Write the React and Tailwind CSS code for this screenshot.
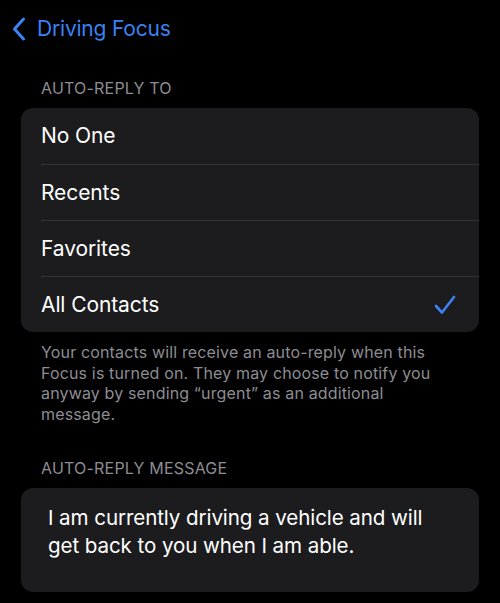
import React from 'react';

const options = ['No One', 'Recents', 'Favorites', 'All Contacts'];

const BackChevron = () => (
  <svg width="14" height="24" viewBox="0 0 14 24" fill="none">
    <path d="M11.5 2 L2.5 12 L11.5 22" stroke="#3b82f6" strokeWidth="3" strokeLinecap="round" strokeLinejoin="round" />
  </svg>
);

const Check = () => (
  <svg width="22" height="20" viewBox="0 0 22 20" fill="none">
    <path d="M2 11 L8 17.5 L20 2" stroke="#3b82f6" strokeWidth="2.6" strokeLinecap="round" strokeLinejoin="round" />
  </svg>
);

export default function App() {
  const selected = 'All Contacts';

  return (
    <div className="w-[500px] h-[603px] bg-black overflow-hidden font-['Inter','Liberation_Sans',sans-serif] antialiased">
      {/* Nav */}
      <div className="flex items-center gap-[11px] pl-[12px] pt-[16px] h-[42px]">
        <BackChevron />
        <span className="text-[21px] text-[#3b82f6] tracking-[-0.2px]">Driving Focus</span>
      </div>

      {/* Auto-reply to */}
      <div className="pl-[41px] pt-[37px] pb-[11px] text-[16px] leading-[18px] text-[#8d8d93] tracking-[0.2px]">
        AUTO-REPLY TO
      </div>
      <div className="mx-[21px] rounded-[12px] bg-[#1c1c1e] overflow-hidden">
        {options.map((opt, i) => (
          <div key={opt} className="flex items-center h-[56px] pl-[20px]">
            <div className={`flex items-center justify-between h-full flex-1 pr-[23px] ${i > 0 ? 'border-t border-[#333335]' : ''}`}>
              <span className="text-[21px] text-white tracking-[-0.1px]">{opt}</span>
              {opt === selected && <Check />}
            </div>
          </div>
        ))}
      </div>
      <p className="pl-[41px] pr-[56px] pt-[10px] text-[16px] leading-[20.5px] text-[#8d8d93] tracking-[0.15px]">
        Your contacts will receive an auto-reply when this Focus is turned on. They may choose to notify you anyway by sending “urgent” as an additional message.
      </p>

      {/* Auto-reply message */}
      <div className="pl-[41px] pt-[35px] pb-[11px] text-[16px] leading-[18px] text-[#8d8d93] tracking-[0.2px]">
        AUTO-REPLY MESSAGE
      </div>
      <div className="mx-[21px] h-[104px] rounded-[12px] bg-[#1c1c1e] pl-[27px] pr-[50px] pt-[16px]">
        <p className="text-[20.6px] leading-[28px] text-white tracking-[-0.1px]">
          I am currently driving a vehicle and will get back to you when I am able.
        </p>
      </div>
    </div>
  );
}
